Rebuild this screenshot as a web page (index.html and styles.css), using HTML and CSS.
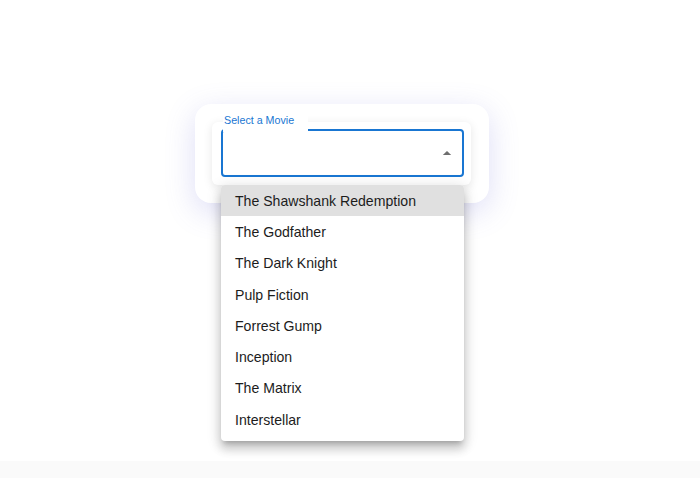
FILE: index.html
```html
<!DOCTYPE html>
<html lang="en">
<head>
    <meta charset="UTF-8">
    <meta name="viewport" content="width=device-width, initial-scale=1.0">
    <title>Movie Select</title>
    <link rel="stylesheet" href="styles.css">
</head>
<body>
    <div class="page">
        <div class="card">
            <div class="form-control">
                <div class="select-field">
                    <label class="select-label">Select a Movie</label>
                    <div class="select-input">
                        <svg class="arrow" viewBox="0 0 24 24" width="20" height="20">
                            <path d="M7 14.5l5-5 5 5z" fill="#6e6e6e"/>
                        </svg>
                    </div>
                    <ul class="menu">
                        <li class="menu-item active">The Shawshank Redemption</li>
                        <li class="menu-item">The Godfather</li>
                        <li class="menu-item">The Dark Knight</li>
                        <li class="menu-item">Pulp Fiction</li>
                        <li class="menu-item">Forrest Gump</li>
                        <li class="menu-item">Inception</li>
                        <li class="menu-item">The Matrix</li>
                        <li class="menu-item">Interstellar</li>
                    </ul>
                </div>
            </div>
        </div>
    </div>
    <div class="page-bottom"></div>
</body>
</html>
```

FILE: styles.css
```css
* {
    margin: 0;
    padding: 0;
    box-sizing: border-box;
}

body {
    font-family: 'Liberation Sans', Arial, sans-serif;
    background: #ffffff;
    color: #1c1c1c;
    width: 700px;
    height: 478px;
    overflow: hidden;
}

.page {
    height: 461px;
    padding: 104px 0 0 195px;
    background: #ffffff;
}

.page-bottom {
    height: 17px;
    background: #fafafa;
}

.card {
    width: 294px;
    height: 99px;
    background: #ffffff;
    border-radius: 16px;
    padding: 18px 18px 18px 17px;
    box-shadow: 0 8px 30px rgba(100, 100, 215, 0.22);
}

.form-control {
    width: 259px;
    height: 63px;
    background: #ffffff;
    border-radius: 6px;
    padding: 7px 7px 8px 9px;
    box-shadow: 0 2px 10px rgba(0, 0, 0, 0.1);
}

.select-field {
    position: relative;
    width: 243px;
}

.select-label {
    position: absolute;
    top: -16px;
    left: 2px;
    height: 19px;
    padding: 0 14px 0 1px;
    background: #ffffff;
    color: #1976d2;
    font-size: 10.7px;
    line-height: 15px;
}

.select-input {
    height: 48px;
    border: 2px solid #1976d2;
    border-radius: 4px;
    display: flex;
    align-items: center;
    justify-content: flex-end;
    padding-right: 5px;
}

.arrow {
    display: block;
    margin-top: 0;
}

.menu {
    position: absolute;
    top: 56px;
    left: 0;
    width: 243px;
    list-style: none;
    background: #ffffff;
    border-radius: 4px;
    padding: 0 0 6px;
    box-shadow: 0 5px 5px -3px rgba(0, 0, 0, 0.2), 0 8px 10px 1px rgba(0, 0, 0, 0.14), 0 3px 14px 2px rgba(0, 0, 0, 0.12);
    overflow: hidden;
    z-index: 2;
}

.menu-item {
    height: 31.3px;
    display: flex;
    align-items: center;
    padding-left: 14px;
    font-size: 14.1px;
    color: #1c1c1c;
}

.menu-item.active {
    background: #e0e0e0;
}
```
